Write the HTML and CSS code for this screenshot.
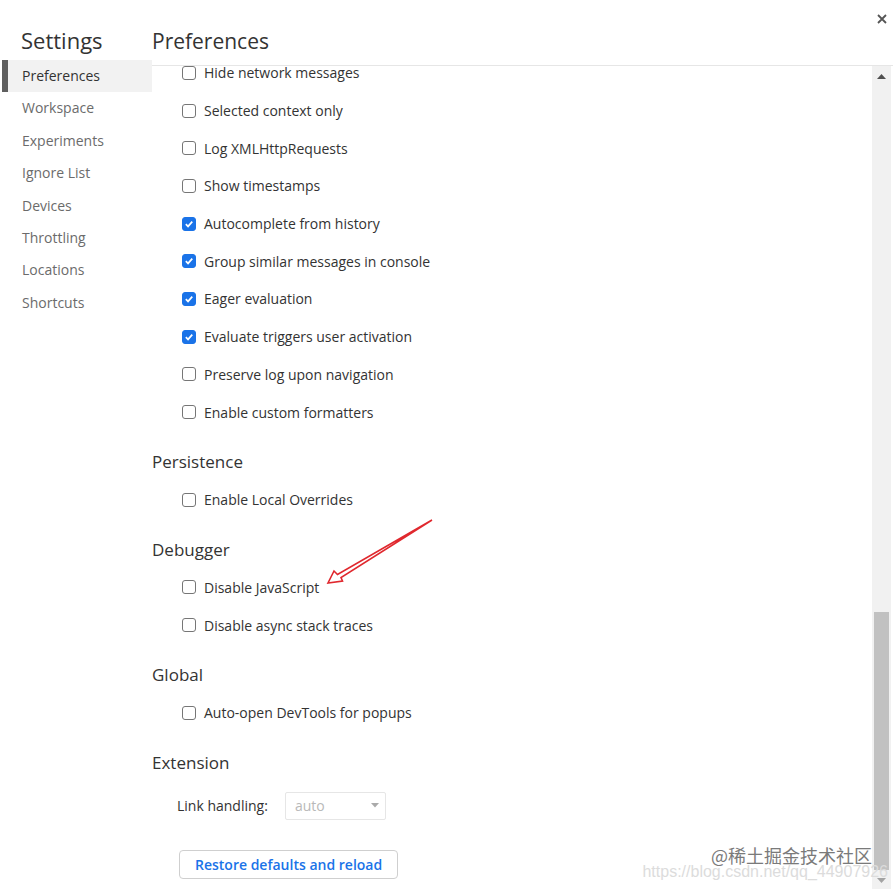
FILE: index.html
```html
<!DOCTYPE html>
<html lang="en">
  <head>
    <meta charset="UTF-8" />
    <meta name="viewport" content="width=device-width, initial-scale=1.0" />
    <title>Settings</title>
    <link rel="stylesheet" href="styles.css">
  </head>
  <body>
    <div class="window">
      <aside class="sidebar">
        <h1 class="sidebar-title">Settings</h1>
        <nav class="tabs">
          <div class="tab selected">Preferences</div>
          <div class="tab">Workspace</div>
          <div class="tab">Experiments</div>
          <div class="tab">Ignore List</div>
          <div class="tab">Devices</div>
          <div class="tab">Throttling</div>
          <div class="tab">Locations</div>
          <div class="tab">Shortcuts</div>
        </nav>
      </aside>

      <main class="panel">
        <header class="panel-header">
          <h2>Preferences</h2>
          <button class="close-btn" title="Close">
            <svg width="10" height="10" viewBox="0 0 10 10">
              <path d="M1 1 L9 9 M9 1 L1 9" stroke="#555" stroke-width="1.8" />
            </svg>
          </button>
        </header>

        <div class="panel-body">
          <div class="scroll-area">
            <div class="settings">
              <label class="setting"><span class="box"></span>Hide network messages</label>
              <label class="setting"><span class="box"></span>Selected context only</label>
              <label class="setting"><span class="box"></span>Log XMLHttpRequests</label>
              <label class="setting"><span class="box"></span>Show timestamps</label>
              <label class="setting"><span class="box checked"><svg viewBox="0 0 14 14"><path d="M3.3 7.2 L5.9 9.8 L10.8 4.3" /></svg></span>Autocomplete from history</label>
              <label class="setting"><span class="box checked"><svg viewBox="0 0 14 14"><path d="M3.3 7.2 L5.9 9.8 L10.8 4.3" /></svg></span>Group similar messages in console</label>
              <label class="setting"><span class="box checked"><svg viewBox="0 0 14 14"><path d="M3.3 7.2 L5.9 9.8 L10.8 4.3" /></svg></span>Eager evaluation</label>
              <label class="setting"><span class="box checked"><svg viewBox="0 0 14 14"><path d="M3.3 7.2 L5.9 9.8 L10.8 4.3" /></svg></span>Evaluate triggers user activation</label>
              <label class="setting"><span class="box"></span>Preserve log upon navigation</label>
              <label class="setting"><span class="box"></span>Enable custom formatters</label>

              <h3 class="section-title">Persistence</h3>
              <label class="setting"><span class="box"></span>Enable Local Overrides</label>

              <h3 class="section-title">Debugger</h3>
              <label class="setting"><span class="box"></span>Disable JavaScript</label>
              <label class="setting"><span class="box"></span>Disable async stack traces</label>

              <h3 class="section-title">Global</h3>
              <label class="setting"><span class="box"></span>Auto-open DevTools for popups</label>

              <h3 class="section-title">Extension</h3>
              <div class="field-row">
                <span class="field-label">Link handling:</span>
                <div class="select">
                  <span>auto</span>
                  <svg width="8" height="5" viewBox="0 0 8 5"><path d="M0 0 L8 0 L4 4.5 Z" fill="#aaa" /></svg>
                </div>
              </div>

              <button class="restore-btn">Restore defaults and reload</button>
            </div>
          </div>

          <div class="scrollbar">
            <div class="sb-btn">
              <svg width="9" height="5" viewBox="0 0 9 5"><path d="M0 5 L4.5 0 L9 5 Z" fill="#505050" /></svg>
            </div>
            <div class="sb-track"><div class="sb-thumb"></div></div>
            <div class="sb-btn">
              <svg width="9" height="5" viewBox="0 0 9 5"><path d="M0 0 L9 0 L4.5 5 Z" fill="#a3a3a3" /></svg>
            </div>
          </div>
        </div>
      </main>
    </div>

    <!-- 标注箭头 -->
    <svg class="annotation" width="120" height="80" viewBox="320 510 120 80">
      <path d="M432 520 L341 577.5 L342.5 581 L328 583 L334 571 L337.5 574.5 L432 520"
        fill="#fff" stroke="#e0282e" stroke-width="1.6" stroke-linejoin="miter" />
    </svg>

    <div class="watermark">
      <div class="wm-juejin">@稀土掘金技术社区</div>
      <div class="wm-csdn">https://blog.csdn.net/qq_44907926</div>
    </div>
  </body>
</html>
```

FILE: styles.css
```css
* {
  box-sizing: border-box;
  margin: 0;
  padding: 0;
}

body {
  font-family: "Open Sans", "Noto Sans", sans-serif;
  font-size: 14px;
  color: #333;
  background: #fff;
  width: 896px;
  height: 889px;
  overflow: hidden;
  position: relative;
}

.window {
  display: flex;
  height: 889px;
  padding-left: 2px;
}

/* 左侧导航 */
.sidebar {
  width: 150px;
  flex-shrink: 0;
}

.sidebar-title {
  font-size: 22px;
  font-weight: 400;
  line-height: 29px;
  padding: 26px 0 5px 19px;
  color: #333;
}

.tab {
  height: 32.4px;
  line-height: 32.4px;
  padding-left: 20px;
  color: #6b6b6b;
  font-size: 14px;
}

.tab.selected {
  background: #f2f2f2;
  color: #333;
  border-left: 6px solid #5f5f5f;
  padding-left: 14px;
}

/* 右侧面板 */
.panel {
  flex: 1;
  display: flex;
  flex-direction: column;
  min-width: 0;
}

.panel-header {
  height: 66px;
  border-bottom: 1px solid #e6e6e6;
  margin-right: 3px;
  position: relative;
}

.panel-header h2 {
  font-size: 21px;
  font-weight: 400;
  line-height: 27px;
  padding-top: 28px;
  color: #333;
}

.close-btn {
  position: absolute;
  top: 13px;
  right: 5px;
  width: 12px;
  height: 12px;
  border: none;
  background: none;
  display: flex;
  align-items: center;
  justify-content: center;
}

.panel-body {
  flex: 1;
  display: flex;
  min-height: 0;
}

.scroll-area {
  flex: 1;
  overflow: hidden;
}

.settings {
  margin-top: -12px;
  padding-left: 30px;
}

.setting {
  display: flex;
  align-items: center;
  height: 37.7px;
  gap: 8px;
  white-space: nowrap;
}

.box {
  width: 14px;
  height: 14px;
  border: 1px solid #767676;
  border-radius: 3px;
  flex-shrink: 0;
  display: flex;
}

.box.checked {
  background: #1a73e8;
  border-color: #1a73e8;
}

.box svg {
  width: 12px;
  height: 12px;
}

.box svg path {
  fill: none;
  stroke: #fff;
  stroke-width: 2;
}

.section-title {
  font-size: 17px;
  font-weight: 400;
  line-height: 24px;
  margin: 19px 0 7px -30px;
  color: #333;
}

.field-row {
  display: flex;
  align-items: center;
  height: 28px;
  margin-top: 17px;
  margin-left: -5px;
}

.field-label {
  width: 108px;
}

.select {
  width: 101px;
  height: 28px;
  border: 1px solid #e6e6e6;
  border-radius: 2px;
  display: flex;
  align-items: center;
  justify-content: space-between;
  padding: 0 6px 0 9px;
  color: #b9b9b9;
}

.restore-btn {
  margin-top: 30px;
  margin-left: -3px;
  height: 29px;
  padding: 0 15px;
  background: #fff;
  border: 1px solid #cfcfcf;
  border-radius: 4px;
  font-family: "Open Sans", "Noto Sans", sans-serif;
  font-size: 14px;
  font-weight: 600;
  color: #1a73e8;
}

/* 滚动条 */
.scrollbar {
  width: 19px;
  margin-right: 5px;
  background: #f1f1f1;
  display: flex;
  flex-direction: column;
}

.sb-btn {
  height: 17px;
  display: flex;
  align-items: center;
  justify-content: center;
  padding-top: 4px;
}

.sb-btn:last-child {
  padding-top: 0;
}

.sb-track {
  flex: 1;
  padding: 0 2px;
}

.sb-thumb {
  margin-top: 529px;
  height: 258px;
  background: #c1c1c1;
}

/* 标注 */
.annotation {
  position: absolute;
  left: 320px;
  top: 510px;
}

.watermark {
  position: absolute;
  right: 8px;
  bottom: 10px;
  text-align: right;
}

.wm-juejin {
  font-family: "Noto Sans CJK SC", sans-serif;
  font-size: 18px;
  line-height: 20px;
  color: #7a7a7a;
  text-shadow: 0 0 2px #fff, 0 0 2px #fff;
  margin-right: 16px;
}

.wm-csdn {
  font-family: "Liberation Sans", Arial, sans-serif;
  font-size: 16px;
  line-height: 14px;
  color: #dcdcdc;
}
```
